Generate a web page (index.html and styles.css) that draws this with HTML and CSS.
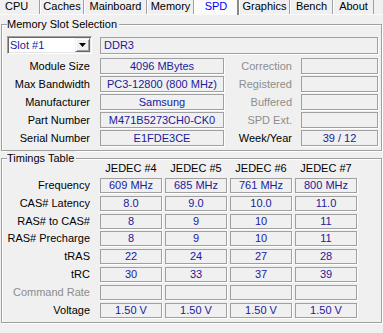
FILE: index.html
```html
<!DOCTYPE html>
<html lang="en">
<head>
  <meta charset="UTF-8" />
  <title>CPU-Z SPD</title>
  <link rel="stylesheet" href="styles.css">
</head>
<body>

  <div class="tabs">
    <div class="tab tab-cpu">CPU</div>
    <div class="tab tab-caches">Caches</div>
    <div class="tab tab-mainboard">Mainboard</div>
    <div class="tab tab-memory">Memory</div>
    <div class="tab tab-spd tab-active">SPD</div>
    <div class="tab tab-graphics">Graphics</div>
    <div class="tab tab-bench">Bench</div>
    <div class="tab tab-about">About</div>
  </div>

  <div class="group group-slot">
    <span class="group-title">Memory Slot Selection</span>

    <div class="slot-row">
      <div class="select">
        <span class="select-value">Slot #1</span>
        <span class="select-btn">
          <svg width="7" height="4" viewBox="0 0 7 4"><polygon points="0,0 7,0 3.5,4" fill="#000"/></svg>
        </span>
      </div>
      <div class="field field-type">DDR3</div>
    </div>

    <div class="slot-grid">
      <span class="label">Module Size</span>
      <span class="field">4096 MBytes</span>
      <span class="label label-right dim">Correction</span>
      <span class="field"></span>

      <span class="label">Max Bandwidth</span>
      <span class="field">PC3-12800 (800 MHz)</span>
      <span class="label label-right dim">Registered</span>
      <span class="field"></span>

      <span class="label">Manufacturer</span>
      <span class="field">Samsung</span>
      <span class="label label-right dim">Buffered</span>
      <span class="field"></span>

      <span class="label">Part Number</span>
      <span class="field">M471B5273CH0-CK0</span>
      <span class="label label-right dim">SPD Ext.</span>
      <span class="field"></span>

      <span class="label">Serial Number</span>
      <span class="field">E1FDE3CE</span>
      <span class="label label-right">Week/Year</span>
      <span class="field">39 / 12</span>
    </div>
  </div>

  <div class="group group-timings">
    <span class="group-title">Timings Table</span>

    <div class="timings">
      <span></span>
      <span class="head">JEDEC #4</span>
      <span class="head">JEDEC #5</span>
      <span class="head">JEDEC #6</span>
      <span class="head">JEDEC #7</span>

      <span class="label">Frequency</span>
      <span class="field">609 MHz</span>
      <span class="field">685 MHz</span>
      <span class="field">761 MHz</span>
      <span class="field">800 MHz</span>

      <span class="label">CAS# Latency</span>
      <span class="field">8.0</span>
      <span class="field">9.0</span>
      <span class="field">10.0</span>
      <span class="field">11.0</span>

      <span class="label">RAS# to CAS#</span>
      <span class="field">8</span>
      <span class="field">9</span>
      <span class="field">10</span>
      <span class="field">11</span>

      <span class="label">RAS# Precharge</span>
      <span class="field">8</span>
      <span class="field">9</span>
      <span class="field">10</span>
      <span class="field">11</span>

      <span class="label">tRAS</span>
      <span class="field">22</span>
      <span class="field">24</span>
      <span class="field">27</span>
      <span class="field">28</span>

      <span class="label">tRC</span>
      <span class="field">30</span>
      <span class="field">33</span>
      <span class="field">37</span>
      <span class="field">39</span>

      <span class="label dim">Command Rate</span>
      <span class="field"></span>
      <span class="field"></span>
      <span class="field"></span>
      <span class="field"></span>

      <span class="label">Voltage</span>
      <span class="field">1.50 V</span>
      <span class="field">1.50 V</span>
      <span class="field">1.50 V</span>
      <span class="field">1.50 V</span>
    </div>
  </div>

</body>
</html>
```

FILE: styles.css
```css
body {
  margin: 0;
  width: 383px;
  height: 333px;
  overflow: hidden;
  background: #f0f0f0;
  font-family: "Liberation Sans", Arial, sans-serif;
  font-size: 11px;
  color: #000;
}

/* tab strip */
.tabs {
  display: flex;
  height: 14px;
  border-bottom: 1px solid #fafafa;
}

.tab {
  box-sizing: border-box;
  height: 14px;
  line-height: 13px;
  text-align: center;
  white-space: nowrap;
  border-left: 1px solid #fff;
  border-right: 1px solid #a0a0a0;
}

.tab-cpu { width: 40px; border-left: none; text-align: left; padding-left: 5px; }
.tab-caches { width: 44px; }
.tab-mainboard { width: 63px; }
.tab-memory { width: 47px; }
.tab-spd { width: 45px; }
.tab-graphics { width: 51px; }
.tab-bench { width: 43px; }
.tab-about { width: 41px; }

.tab-active {
  height: 15px;
  margin-bottom: -1px;
  background: #fbfbfb;
  color: #0000ff;
  border-right: 2px solid #8a8a8a;
}

/* group boxes */
.group {
  position: relative;
  box-sizing: border-box;
  width: 381px;
  margin-left: 1px;
  border: 1px solid #a0a0a0;
  box-shadow: inset 1px 1px 0 #fff, 1px 1px 0 #fff;
}

.group-title {
  position: absolute;
  top: -8px;
  left: 5px;
  padding: 0 2px 0 0;
  line-height: 14px;
  background: #f0f0f0;
}

.group-slot {
  margin-top: 9px;
  height: 127px;
  padding: 11px 0 0 5px;
}

.group-timings {
  margin-top: 7px;
  height: 165px;
  padding: 3px 0 0 5px;
}

/* value boxes */
.field {
  box-sizing: border-box;
  height: 16px;
  line-height: 14px;
  border: 1px solid #a0a0a0;
  box-shadow: 1px 1px 0 #fff;
  color: #1a1a9c;
  text-align: center;
  white-space: nowrap;
  overflow: hidden;
}

.label {
  text-align: right;
  padding-right: 10px;
  line-height: 16px;
  white-space: nowrap;
}

.dim {
  color: #8d8d8d;
}

/* memory slot selection */
.slot-row {
  display: flex;
  align-items: center;
  gap: 8px;
  height: 18px;
  margin-bottom: 4px;
}

.select {
  box-sizing: border-box;
  display: flex;
  align-items: center;
  width: 85px;
  height: 18px;
  background: #fff;
  border: 1px solid;
  border-color: #a0a0a0 #fff #fff #a0a0a0;
  box-shadow: inset 1px 1px 0 #696969, inset -1px -1px 0 #e3e3e3;
}

.select-value {
  flex: 1;
  padding-left: 2px;
  color: #1a1a9c;
}

.select-btn {
  box-sizing: border-box;
  display: flex;
  align-items: center;
  justify-content: center;
  width: 15px;
  height: 14px;
  margin-right: 1px;
  background: #f0f0f0;
  border: 1px solid;
  border-color: #f0f0f0 #696969 #696969 #f0f0f0;
  box-shadow: inset 1px 1px 0 #fff, inset -1px -1px 0 #a0a0a0;
}

.field-type {
  width: 278px;
  height: 17px;
  line-height: 15px;
  padding-left: 3px;
  text-align: left;
}

.slot-grid {
  display: grid;
  grid-template-columns: 93px 124px 77px 77px;
  grid-auto-rows: 16px;
  row-gap: 2px;
}

.slot-grid .label-right {
  padding-right: 9px;
}

/* timings table */
.timings {
  display: grid;
  grid-template-columns: 90px repeat(4, 62px);
  grid-template-rows: 13px repeat(8, 15px);
  column-gap: 3px;
  row-gap: 2.86px;
}

.timings .head {
  text-align: center;
  line-height: 13px;
  white-space: nowrap;
}

.timings .label {
  padding-right: 7px;
  line-height: 15px;
}

.timings .field {
  height: 15px;
  line-height: 13px;
}
```
